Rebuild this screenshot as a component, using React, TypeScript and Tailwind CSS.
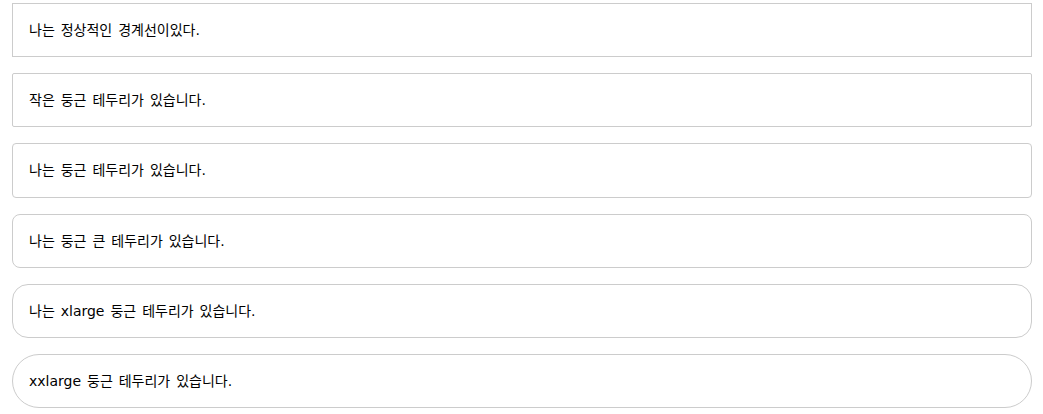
const rows = [
  { text: "나는 정상적인 경계선이있다.", radius: "rounded-none" },
  { text: "작은 둥근 테두리가 있습니다.", radius: "rounded-[2px]" },
  { text: "나는 둥근 테두리가 있습니다.", radius: "rounded-[4px]" },
  { text: "나는 둥근 큰 테두리가 있습니다.", radius: "rounded-[8px]" },
  { text: "나는 xlarge 둥근 테두리가 있습니다.", radius: "rounded-[16px]" },
  { text: "xxlarge 둥근 테두리가 있습니다.", radius: "rounded-[30px]" },
];

export default function App() {
  return (
    <div
      className="min-h-screen bg-white pt-[3px] pl-[12px] pr-[11px] text-black"
      style={{ fontFamily: '"DejaVu Sans", "Noto Sans CJK KR", sans-serif' }}
    >
      <div className="flex flex-col gap-4">
        {rows.map((row) => (
          <div
            key={row.text}
            className={`border border-[#cccccc] p-4 text-[14px] leading-[20.2px] [word-spacing:1.5px] ${row.radius}`}
          >
            {row.text}
          </div>
        ))}
      </div>
    </div>
  );
}
